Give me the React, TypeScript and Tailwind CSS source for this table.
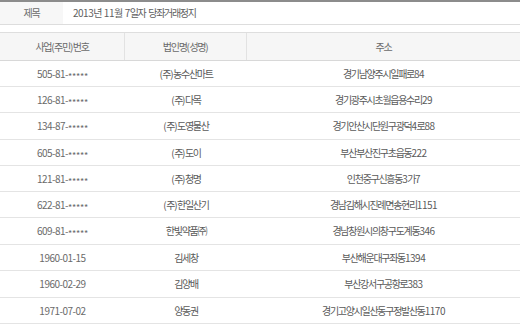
import React from "react";

const rows: { id: string; name: string; addr: string; h: string }[] = [
  { id: "505-81-*****", name: "(주)농수산마트", addr: "경기남양주시일패로84", h: "h-[26px]" },
  { id: "126-81-*****", name: "(주)다목", addr: "경기광주시초월읍용수리29", h: "h-[26px]" },
  { id: "134-87-*****", name: "(주)도영물산", addr: "경기안산시단원구광덕4로88", h: "h-[27px]" },
  { id: "605-81-*****", name: "(주)도이", addr: "부산부산진구초읍동222", h: "h-[26px]" },
  { id: "121-81-*****", name: "(주)청명", addr: "인천중구신흥동3가7", h: "h-[26px]" },
  { id: "622-81-*****", name: "(주)한일산기", addr: "경남김해시진례면송현리1151", h: "h-[26px]" },
  { id: "609-81-*****", name: "한빛약품㈜", addr: "경남창원시의창구도계동346", h: "h-[27px]" },
  { id: "1960-01-15", name: "김세창", addr: "부산해운대구좌동1394", h: "h-[26px]" },
  { id: "1960-02-29", name: "김양배", addr: "부산강서구공항로383", h: "h-[27px]" },
  { id: "1971-07-02", name: "양동권", addr: "경기고양시일산동구정발산동1170", h: "h-[26px]" },
];

function T({ s }: { s: string }) {
  const parts = s.split(/(\*+| +|[\x00-\x1f\x21-\x29\x2b-\x7F]+)/).filter((p) => p.length > 0);
  return (
    <span className="whitespace-pre">
      {parts.map((p, i) =>
        /^\*+$/.test(p) ? (
          <span key={i} className="text-[9px] tracking-[-0.2px] relative top-[2px]">{p}</span>
        ) : /^ +$/.test(p) ? (
          <span key={i} className="tracking-[0.5px]">{p}</span>
        ) : /^[\x00-\x7F]+$/.test(p) ? (
          <span key={i} className="tracking-[-0.5px]">{p}</span>
        ) : (
          <span key={i}>{p}</span>
        )
      )}
    </span>
  );
}

export default function App() {
  return (
    <div className="w-[520px] h-[324px] overflow-hidden bg-white font-['Noto_Sans_CJK_KR',sans-serif] text-[10px] leading-none tracking-[-1.3px] text-[#6a6a6a]">
      <div className="flex h-[25px] border-t-2 border-b border-t-[#8c8c8c] border-b-[#dddddd]">
        <div className="w-[63px] bg-[#f7f7f7] flex items-center justify-center"><T s="제목" /></div>
        <div className="flex-1 flex items-center pl-[10px] text-[#5e5e5e]"><T s="2013년 11월 7일자 당좌거래정지" /></div>
      </div>
      <div className="h-[7px]" />
      <div className="grid grid-cols-[125px_122px_1fr] h-[29px] bg-[#f6f6f6] border-t border-b border-t-[#dedede] border-b-[#d8d8d8]">
        <div className="flex items-center justify-center border-r border-[#e2e2e2]"><T s="사업(주민)번호" /></div>
        <div className="flex items-center justify-center border-r border-[#e2e2e2]"><T s="법인명(성명)" /></div>
        <div className="flex items-center justify-center"><T s="주소" /></div>
      </div>
      {rows.map((r) => (
        <div key={r.id} className={`grid grid-cols-[125px_122px_1fr] border-b border-[#e4e4e4] ${r.h}`}>
          <div className="flex items-center justify-center"><T s={r.id} /></div>
          <div className="flex items-center justify-center text-[#5a5a5a]"><T s={r.name} /></div>
          <div className="flex items-center justify-center text-[#5a5a5a]"><T s={r.addr} /></div>
        </div>
      ))}
    </div>
  );
}
